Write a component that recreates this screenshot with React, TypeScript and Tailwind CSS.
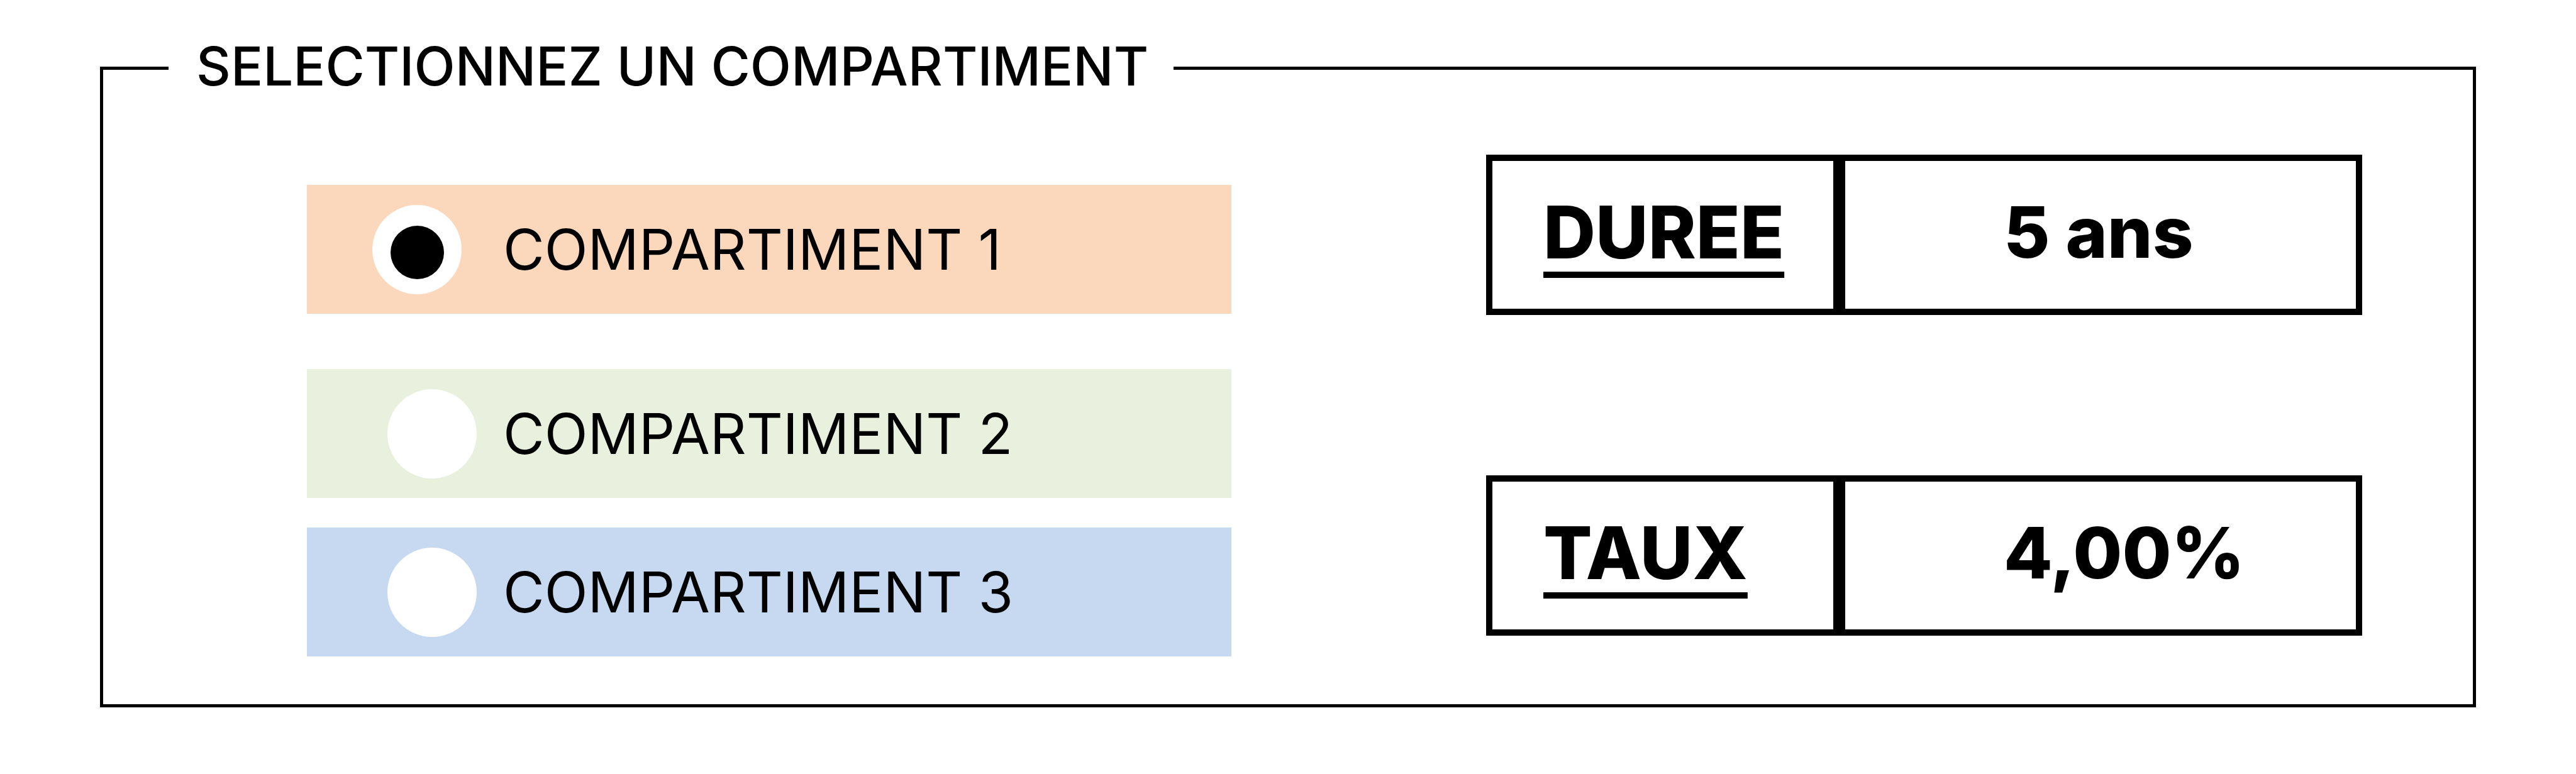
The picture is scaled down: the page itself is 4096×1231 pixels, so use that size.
import { useState } from "react";

const compartments = [
  { id: "1", label: "COMPARTIMENT 1", row: "bg-[#fbd7bc]" },
  { id: "2", label: "COMPARTIMENT 2", row: "mt-[88px] bg-[#eaf0de]" },
  { id: "3", label: "COMPARTIMENT 3", row: "mt-[47px] bg-[#c7d9f1]" },
];

const facts = [
  { name: "DUREE", value: "5 ans" },
  { name: "TAUX", value: "4,00%" },
];

export default function App() {
  const [selected, setSelected] = useState("1");

  return (
    <main className="bg-white px-[159px] pt-[58px] pb-[106px] font-['Inter',sans-serif] text-black">
      <fieldset className="border-5 border-black">
        <legend className="ml-[104px] pr-[40px] pb-[4px] pl-[44px] text-[85px] leading-[96px] font-medium whitespace-nowrap">
          SELECTIONNEZ UN COMPARTIMENT
        </legend>
        <div className="grid grid-cols-[1470fr_1393fr] gap-x-[405px] pr-[176px] pb-[76px] pl-[324px]">
          <div className="pt-[136px]">
            {compartments.map((c) => (
              <label
                key={c.id}
                className={`flex h-[205px] items-center text-[90px] leading-none whitespace-nowrap ${c.row}`}
              >
                <input
                  type="radio"
                  name="compartiment"
                  value={c.id}
                  checked={selected === c.id}
                  onChange={() => setSelected(c.id)}
                  className="mr-[42px] ml-[128px] flex size-[142px] shrink-0 appearance-none justify-center rounded-full bg-white pt-[33px] checked:mr-[66px] checked:ml-[104px] checked:before:size-[85px] checked:before:rounded-full checked:before:bg-black checked:before:content-['']"
                />
                {c.label}
              </label>
            ))}
          </div>
          <dl className="flex flex-col gap-[255px] pt-[88px]">
            {facts.map((f) => (
              <div key={f.name} className="grid h-[255px] grid-cols-[562fr_831fr] leading-none font-extrabold">
                <dt className="flex items-center border-[10px] border-black pb-[8px] pl-[81px] text-[115px]">
                  <span className="underline decoration-[10px] underline-offset-[21px]">{f.name}</span>
                </dt>
                <dd className="flex items-center border-[10px] border-l-[9px] border-black pb-[8px] pl-[252px] text-[113px]">
                  {f.value}
                </dd>
              </div>
            ))}
          </dl>
        </div>
      </fieldset>
    </main>
  );
}
